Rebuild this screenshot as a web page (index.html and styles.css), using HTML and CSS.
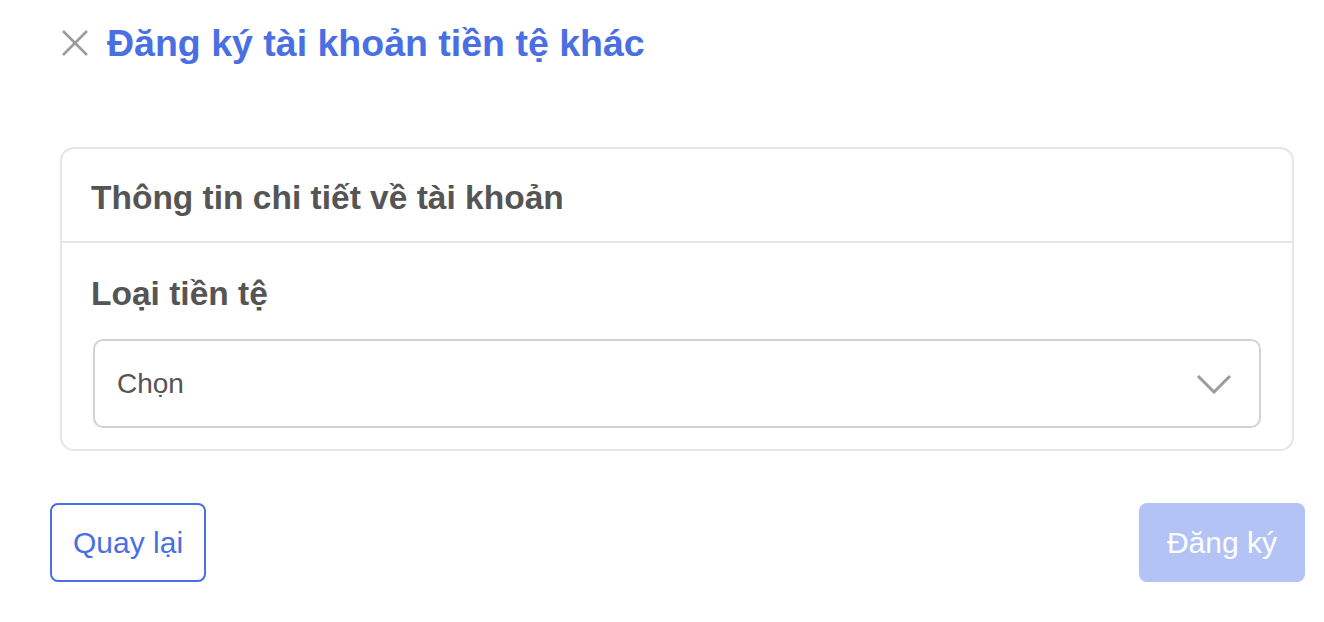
FILE: index.html
```html
<!DOCTYPE html>
<html lang="vi">

<head>
  <meta charset="UTF-8">
  <title>Đăng ký tài khoản tiền tệ khác</title>
  <link rel="stylesheet" href="styles.css">
</head>

<body>
  <div class="page">
    <div class="topbar">
      <svg class="close-icon" width="26" height="26" viewBox="0 0 26 26">
        <path d="M1 1 L25 25 M25 1 L1 25" />
      </svg>
      <h1 class="title">Đăng ký tài khoản tiền tệ khác</h1>
    </div>

    <section class="card">
      <div class="card-head">Thông tin chi tiết về tài khoản</div>
      <div class="card-body">
        <div class="field-label">Loại tiền tệ</div>
        <div class="select">
          <span class="select-value">Chọn</span>
          <svg class="chevron" width="36" height="20" viewBox="0 0 36 20">
            <path d="M2 2 L18 18 L34 2" />
          </svg>
        </div>
      </div>
    </section>

    <div class="actions">
      <button class="btn btn-outline" type="button">Quay lại</button>
      <button class="btn btn-primary" type="button" disabled>Đăng ký</button>
    </div>
  </div>
</body>

</html>
```

FILE: styles.css
```css
body {
  --blue: #4a6fe3;
  --blueDisabled: #b3c3f5;
  --text: #555555;
  --line: #e6e6e6;
  --fieldLine: #d2d2d2;

  margin: 0;
  background: #ffffff;
  font-family: "Liberation Sans", Arial, sans-serif;
  color: var(--text);
}

.page {
  padding: 0 19px 0 50px;
}

.topbar {
  height: 86px;
  display: flex;
  align-items: center;
  gap: 19px;
  padding-left: 12px;
}

.close-icon path {
  stroke: #9a9a9a;
  stroke-width: 2.5;
  fill: none;
}

.title {
  margin: 0;
  font-size: 37.5px;
  line-height: 44px;
  font-weight: bold;
  color: var(--blue);
}

.card {
  margin: 61px 11px 0 10px;
  border: 2px solid var(--line);
  border-radius: 14px;
}

.card-head {
  padding: 29px 29px 23px;
  font-size: 33.5px;
  line-height: 40px;
  font-weight: bold;
  border-bottom: 2px solid var(--line);
}

.card-body {
  padding: 31px 31px 21px;
}

.field-label {
  margin-left: -2px;
  font-size: 33.5px;
  line-height: 40px;
  font-weight: bold;
}

.select {
  margin-top: 25px;
  height: 85px;
  border: 2px solid var(--fieldLine);
  border-radius: 10px;
  display: flex;
  align-items: center;
  justify-content: space-between;
  padding: 0 27px 0 22px;
}

.select-value {
  font-size: 28px;
}

.chevron path {
  stroke: #9c9c9c;
  stroke-width: 3;
  fill: none;
}

.actions {
  margin-top: 52px;
  display: flex;
  justify-content: space-between;
}

.btn {
  height: 79px;
  border-radius: 8px;
  font-family: inherit;
  font-size: 30px;
}

.btn-outline {
  padding: 0 21px;
  background: #ffffff;
  border: 2px solid var(--blue);
  color: var(--blue);
}

.btn-primary {
  padding: 0 28px;
  background: var(--blueDisabled);
  border: none;
  color: #ffffff;
}
```
